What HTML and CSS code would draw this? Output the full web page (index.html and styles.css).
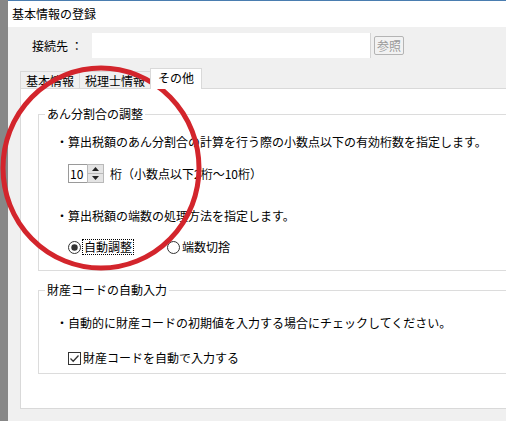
FILE: index.html
```html
<!DOCTYPE html>
<html lang="ja">
<head>
<meta charset="utf-8">
<link rel="stylesheet" href="styles.css">
</head>
<body>
<div class="screen">
  <div class="strip"></div>
  <div class="window">
    <div class="titlebar">基本情報の登録</div>
    <div class="body">
      <div class="conn-row">
        <span class="conn-label">接続先 ：</span>
        <div class="conn-input"></div>
        <div class="btn-ref">参照</div>
      </div>
      <div class="tabs">
        <div class="tab t1">基本情報</div>
        <div class="tab t2">税理士情報</div>
        <div class="tab t3 active">その他</div>
      </div>
      <div class="panel">
        <fieldset class="group g1">
          <legend>あん分割合の調整</legend>
          <p class="line l1">・算出税額のあん分割合の計算を行う際の小数点以下の有効桁数を指定します。</p>
          <div class="spin-row">
            <div class="spin">
              <span class="spin-val">10</span>
              <span class="spin-btns">
                <span class="sb"><svg width="7" height="4" viewBox="0 0 7 4"><path d="M3.5 0 L7 4 L0 4 Z" fill="#222"/></svg></span>
                <span class="sb"><svg width="7" height="4" viewBox="0 0 7 4"><path d="M0 0 L7 0 L3.5 4 Z" fill="#222"/></svg></span>
              </span>
            </div>
            <span class="spin-text">桁（小数点以下2桁～10桁）</span>
          </div>
          <p class="line l2">・算出税額の端数の処理方法を指定します。</p>
          <div class="radio-row">
            <span class="opt">
              <svg class="radio" width="13" height="13" viewBox="0 0 13 13"><circle cx="6.5" cy="6.5" r="6" fill="#fff" stroke="#333"/><circle cx="6.5" cy="6.5" r="3.2" fill="#333"/></svg>
              <span class="focus">自動調整</span>
            </span>
            <span class="opt opt2">
              <svg class="radio" width="13" height="13" viewBox="0 0 13 13"><circle cx="6.5" cy="6.5" r="6" fill="#fff" stroke="#333"/></svg>
              <span class="opt-label">端数切捨</span>
            </span>
          </div>
        </fieldset>
        <fieldset class="group g2">
          <legend>財産コードの自動入力</legend>
          <p class="line l3">・自動的に財産コードの初期値を入力する場合にチェックしてください。</p>
          <div class="check-row">
            <svg class="check" width="13" height="13" viewBox="0 0 13 13"><rect x="0.5" y="0.5" width="12" height="12" fill="#fff" stroke="#333"/><path d="M2.5 6.5 L5.2 9.2 L10.5 3.5" fill="none" stroke="#333" stroke-width="1.3"/></svg>
            <span class="opt-label">財産コードを自動で入力する</span>
          </div>
        </fieldset>
      </div>
    </div>
  </div>
  <svg class="mark" width="506" height="421" viewBox="0 0 506 421"><ellipse cx="101" cy="168" rx="98" ry="100" fill="none" stroke="#d3252c" stroke-width="5"/></svg>
</div>
</body>
</html>
```
FILE: styles.css
```css
html, body {
  margin: 0;
  padding: 0;
}
body {
  width: 506px;
  height: 421px;
  overflow: hidden;
  background: #f0f0f0;
  font-family: "Noto Sans CJK JP", "Noto Sans", sans-serif;
  font-size: 12px;
  line-height: 16px;
  color: #000;
}
.screen {
  position: relative;
  display: flex;
  width: 506px;
  height: 421px;
}
.strip {
  width: 8px;
  flex: none;
  background: #878787;
}
.window {
  flex: 1;
  min-width: 0;
  display: flex;
  flex-direction: column;
  background: #f0f0f0;
}
.titlebar {
  height: 26px;
  border-top: 1px solid #4a7db0;
  background: #fff;
  padding-left: 4px;
  display: flex;
  align-items: center;
}
.body {
  padding: 0 0 0 12px;
}
.conn-row {
  display: flex;
  align-items: center;
  height: 25px;
  margin-top: 6px;
  padding-left: 12px;
}
.conn-label {
  width: 60px;
}
.conn-input {
  width: 278px;
  height: 25px;
  background: #fff;
  border-right: 1px solid #d4d4d4;
}
.btn-ref {
  margin-left: 3px;
  width: 28px;
  height: 17px;
  border: 1px solid #b4b4b4;
  border-radius: 2px;
  background: #f2f2f2;
  color: #9a9a9a;
  display: flex;
  align-items: center;
  justify-content: center;
}
.tabs {
  display: flex;
  align-items: flex-end;
  margin-top: 10px;
  height: 20px;
}
.tab {
  height: 17px;
  box-sizing: border-box;
  background: #f0f0f0;
  border: 1px solid #d9d9d9;
  border-bottom: none;
  display: flex;
  align-items: center;
  justify-content: center;
  padding-top: 1px;
}
.t1 { width: 60px; }
.t2 { width: 72px; margin-left: -1px; }
.t3 { width: 52px; margin-left: -1px; }
.tab.active {
  height: 21px;
  margin-bottom: -1px;
  background: #fff;
  position: relative;
  z-index: 1;
  padding-top: 0;
  padding-bottom: 2px;
}
.panel {
  height: 321px;
  box-sizing: border-box;
  background: #fff;
  border: 1px solid #d9d9d9;
  border-right: none;
  padding: 17px 0 0 17px;
}
.group {
  margin: 0;
  border: 1px solid #dcdcdc;
  border-right: none;
  padding: 0 0 0 6px;
  min-width: 0;
}
.group legend {
  padding: 0 2px;
  line-height: 16px;
}
.g1 { padding-bottom: 15px; }
.g2 { margin-top: 11px; padding-bottom: 7px; }
.line {
  margin: 0;
  padding-left: 11px;
  white-space: nowrap;
}
.l1 { margin-top: 12px; }
.l2 { margin-top: 25px; }
.l3 { margin-top: 17px; }
.spin-row {
  display: flex;
  align-items: center;
  margin-top: 14px;
  padding-left: 23px;
  height: 19px;
}
.spin {
  display: flex;
  height: 19px;
  box-sizing: border-box;
  border: 1px solid #9a9a9a;
  background: #fff;
}
.spin-val {
  width: 17px;
  padding-left: 1px;
  line-height: 17px;
}
.spin-btns {
  display: flex;
  flex-direction: column;
  width: 16px;
}
.sb {
  flex: 1;
  display: flex;
  align-items: center;
  justify-content: center;
  background: #e4e4e4;
  border: 1px solid #b9b9b9;
  margin: -1px -1px 0 0;
}
.sb + .sb {
  margin-top: -1px;
  margin-bottom: -1px;
}
.spin-text {
  margin-left: 6px;
}
.radio-row {
  display: flex;
  align-items: center;
  margin-top: 15px;
  padding-left: 23px;
  height: 16px;
}
.opt {
  display: flex;
  align-items: center;
}
.opt2 {
  margin-left: 33px;
}
.radio, .check {
  flex: none;
}
.focus {
  margin-left: 1px;
  border: 1px dotted #000;
  padding: 0 1px;
  line-height: 14px;
}
.opt-label {
  margin-left: 2px;
}
.check-row {
  display: flex;
  align-items: center;
  margin-top: 19px;
  padding-left: 23px;
  height: 16px;
}
.mark {
  position: absolute;
  left: 0;
  top: 0;
  pointer-events: none;
}
```
